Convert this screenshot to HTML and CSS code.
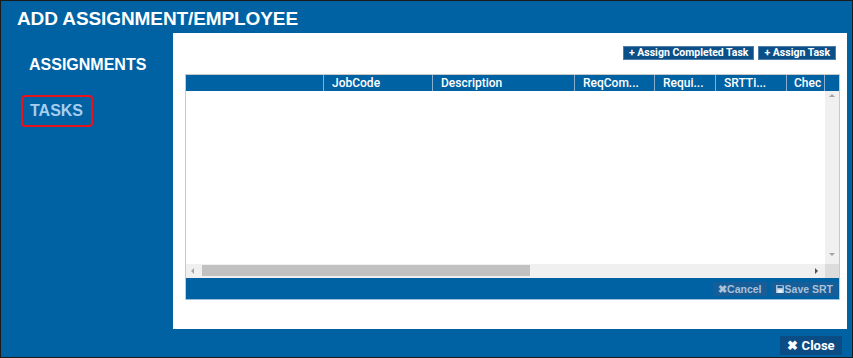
FILE: index.html
```html
<!DOCTYPE html>
<html lang="en">
<head>
    <meta charset="UTF-8">
    <title>Add Assignment/Employee</title>
    <link rel="stylesheet" href="styles.css">
</head>
<body>
    <div class="window">
        <div class="titlebar">ADD ASSIGNMENT/EMPLOYEE</div>

        <div class="main">
            <nav class="sidebar">
                <a href="#" class="nav-item">ASSIGNMENTS</a>
                <a href="#" class="nav-item active">TASKS</a>
            </nav>

            <section class="panel">
                <div class="toolbar">
                    <button class="tool-btn">+ Assign Completed Task</button>
                    <button class="tool-btn">+ Assign Task</button>
                </div>

                <div class="grid">
                    <div class="grid-head">
                        <div class="cell c-select"></div>
                        <div class="cell c-job">JobCode</div>
                        <div class="cell c-desc">Description</div>
                        <div class="cell c-req">ReqCom...</div>
                        <div class="cell c-requi">Requi...</div>
                        <div class="cell c-srt">SRTTi...</div>
                        <div class="cell c-chec">Chec</div>
                        <div class="cell c-pad"></div>
                    </div>

                    <div class="grid-body">
                        <div class="rows"></div>
                        <div class="vscroll">
                            <span class="arrow up"></span>
                            <span class="arrow down"></span>
                        </div>
                    </div>

                    <div class="hscroll">
                        <span class="arrow left"></span>
                        <div class="track"><div class="thumb"></div></div>
                        <span class="arrow right"></span>
                        <div class="corner"></div>
                    </div>

                    <div class="grid-foot">
                        <button class="foot-btn">&#10006;Cancel</button>
                        <button class="foot-btn">
                            <svg width="8" height="8" viewBox="0 0 8 8"><path d="M0 0h7l1 1v7H0z" fill="#a9c2da"/><rect x="1.5" y="0.8" width="5" height="2.2" fill="#175d98"/><rect x="1.5" y="4.5" width="5" height="3.5" fill="#e6eef6"/></svg>Save SRT
                        </button>
                    </div>
                </div>
            </section>
        </div>

        <div class="statusbar">
            <button class="close-btn">&#10006; Close</button>
        </div>
    </div>
</body>
</html>
```

FILE: styles.css
```css
* {
    margin: 0;
    padding: 0;
    box-sizing: border-box;
}

body {
    background: #ffffff;
    font-family: 'Liberation Sans', Arial, sans-serif;
}

.window {
    width: 853px;
    height: 358px;
    background: #0062a3;
    border: 1px solid #1b1b1b;
    display: flex;
    flex-direction: column;
}

.titlebar {
    height: 32px;
    padding: 7px 0 0 16px;
    color: #ffffff;
    font-size: 19px;
    line-height: 22px;
    font-weight: bold;
    letter-spacing: -0.1px;
}

.main {
    height: 296px;
    display: flex;
}

.sidebar {
    width: 172px;
    padding: 16px 0 0 20px;
    display: flex;
    flex-direction: column;
    align-items: flex-start;
    gap: 14px;
}

.nav-item {
    display: block;
    padding: 5px 6px;
    border: 2px solid transparent;
    border-radius: 4px;
    color: #ffffff;
    font-size: 16px;
    line-height: 18px;
    font-weight: bold;
    text-decoration: none;
}

.nav-item.active {
    color: #a6cdee;
    border-color: #e8121b;
    padding: 5px 8px 5px 7px;
}

.panel {
    width: 674px;
    background: #ffffff;
    padding: 13px 7px 29px 12px;
    display: flex;
    flex-direction: column;
}

.toolbar {
    height: 14px;
    margin-bottom: 14px;
    display: flex;
    justify-content: flex-end;
    gap: 4px;
    padding-right: 4px;
}

.tool-btn {
    height: 14px;
    padding: 0 5px;
    background: #0b4f88;
    border: 1px solid #4d7ea9;
    color: #ffffff;
    font-family: Roboto, sans-serif;
    font-size: 10.5px;
    font-weight: bold;
    line-height: 12px;
}

.grid {
    height: 226px;
    border: 1px solid #c9c9c9;
    border-bottom: none;
    display: flex;
    flex-direction: column;
}

.grid-head {
    height: 16px;
    background: #0062a3;
    display: flex;
}

.cell {
    height: 16px;
    padding-left: 8px;
    border-right: 1px solid #8aaed0;
    color: #ffffff;
    font-family: Roboto, sans-serif;
    font-size: 12px;
    font-weight: 500;
    line-height: 16px;
    white-space: nowrap;
    overflow: hidden;
    flex-shrink: 0;
}

.c-select { width: 138px; }
.c-job { width: 109px; }
.c-desc { width: 142px; }
.c-req { width: 80px; }
.c-requi { width: 61px; }
.c-srt { width: 71px; }
.c-chec { width: 38px; padding-left: 7px; }
.c-pad { width: 14px; border-right: none; }

.grid-body {
    height: 173px;
    display: flex;
}

.rows {
    flex: 1;
    background: #ffffff;
}

.vscroll {
    width: 14px;
    background: #f0f0f0;
    position: relative;
}

.arrow {
    position: absolute;
    width: 0;
    height: 0;
    border: 3px solid transparent;
}

.arrow.up {
    top: 3px;
    left: 4px;
    border-bottom: 3px solid #a3a3a3;
    border-top: none;
}

.arrow.down {
    bottom: 8px;
    left: 4px;
    border-top: 3px solid #a3a3a3;
    border-bottom: none;
}

.hscroll {
    height: 14px;
    background: #f0f0f0;
    display: flex;
    align-items: center;
    position: relative;
}

.arrow.left {
    left: 5px;
    top: 4px;
    border-right: 3px solid #a3a3a3;
    border-left: none;
}

.arrow.right {
    right: 21px;
    top: 4px;
    border-left: 3px solid #505050;
    border-right: none;
}

.track {
    flex: 1;
    height: 12px;
    padding-left: 16px;
}

.thumb {
    width: 328px;
    height: 11px;
    background: #c1c1c1;
}

.corner {
    width: 14px;
    height: 14px;
    background: #dcdcdc;
}

.grid-foot {
    height: 22px;
    background: #0062a3;
    border-bottom: 1px solid #9fc0dc;
    display: flex;
    justify-content: flex-end;
    align-items: flex-start;
    gap: 4px;
    padding: 4px 1px 0 0;
}

.foot-btn {
    height: 14px;
    padding: 0 5px;
    background: #175d98;
    border: none;
    color: #a9c2da;
    font-family: 'Liberation Sans', Arial, sans-serif;
    font-size: 10.5px;
    font-weight: bold;
    line-height: 14px;
    display: flex;
    align-items: center;
    gap: 1px;
}

.statusbar {
    height: 28px;
    display: flex;
    justify-content: flex-end;
    padding: 7px 10px 0 0;
}

.close-btn {
    width: 62px;
    height: 19px;
    background: #0b4c84;
    border: none;
    color: #ffffff;
    font-family: Roboto, sans-serif;
    font-size: 13px;
    font-weight: bold;
    line-height: 19px;
}
```
